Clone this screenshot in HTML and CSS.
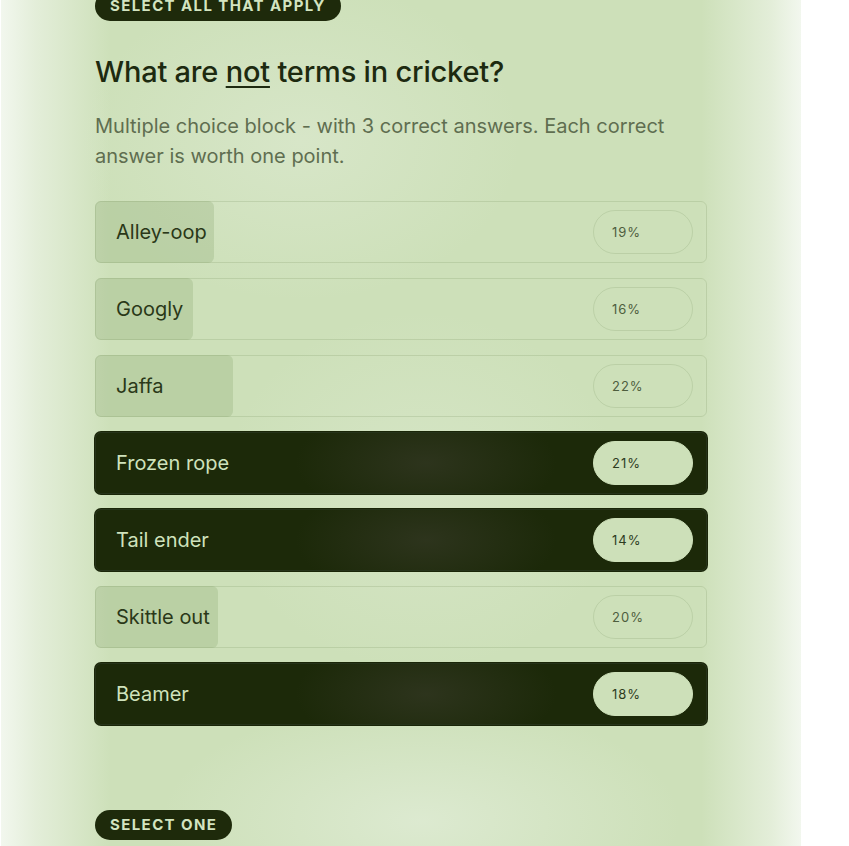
FILE: index.html
```html
<!DOCTYPE html>
<html>
<head>
<meta charset="utf-8">
<link rel="stylesheet" href="styles.css">
</head>
<body>
<div class="panel">
  <section class="block">
    <span class="badge">Select all that apply</span>
    <h2 class="title">What are <u>not</u> terms in cricket?</h2>
    <p class="desc">Multiple choice block - with 3 correct answers. Each correct answer is worth one point.</p>
    <div class="options">
      <div class="option"><div class="fill" style="width:19.5%"></div><span class="label">Alley-oop</span><span class="pct">19%</span></div>
      <div class="option"><div class="fill" style="width:16%"></div><span class="label">Googly</span><span class="pct">16%</span></div>
      <div class="option"><div class="fill" style="width:22.6%"></div><span class="label">Jaffa</span><span class="pct">22%</span></div>
      <div class="option selected"><span class="label">Frozen rope</span><span class="pct">21%</span></div>
      <div class="option selected"><span class="label">Tail ender</span><span class="pct">14%</span></div>
      <div class="option"><div class="fill" style="width:20.1%"></div><span class="label">Skittle out</span><span class="pct">20%</span></div>
      <div class="option selected"><span class="label">Beamer</span><span class="pct">18%</span></div>
    </div>
  </section>
  <section class="block next">
    <span class="badge">Select one</span>
  </section>
</div>
</body>
</html>
```
FILE: styles.css
```css
html, body {
  margin: 0;
  padding: 0;
  background: #ffffff;
  overflow: hidden;
}
body {
  font-family: Inter, "Noto Sans", sans-serif;
}
.panel {
  width: 800px;
  margin: -9px 0 0 1px;
  padding: 0 94px;
  box-sizing: border-box;
  min-height: 900px;
  background:
    linear-gradient(90deg, rgba(242,247,238,1) 0px, rgba(242,247,238,0.6) 35px, rgba(242,247,238,0) 110px, rgba(242,247,238,0) 700px, rgba(242,247,238,0.6) 770px, rgba(242,247,238,1) 800px),
    radial-gradient(ellipse 220px 160px at 300px 150px, rgba(222,234,210,0.6), rgba(222,234,210,0)),
    radial-gradient(ellipse 200px 180px at 420px 500px, rgba(222,234,210,0.5), rgba(222,234,210,0)),
    radial-gradient(ellipse 260px 120px at 420px 830px, rgba(224,236,214,0.8), rgba(224,236,214,0)),
    #cde0b9;
}
.badge {
  display: inline-block;
  height: 30px;
  line-height: 30px;
  padding: 0 15px;
  border-radius: 15px;
  background: #1e2a0b;
  color: #d3e4c0;
  font-size: 15px;
  font-weight: 700;
  letter-spacing: 1.4px;
  text-transform: uppercase;
}
.title {
  margin: 33px 0 0;
  font-size: 29px;
  line-height: 36px;
  font-weight: 500;
  color: #1d2a10;
  letter-spacing: -0.2px;
}
.title u {
  text-decoration-thickness: 2px;
  text-underline-offset: 4px;
}
.desc {
  margin: 21px 0 0;
  font-size: 20px;
  line-height: 30px;
  color: #5f6e50;
  max-width: 600px;
}
.options {
  margin-top: 30px;
  display: flex;
  flex-direction: column;
  gap: 15px;
}
.option {
  position: relative;
  height: 62px;
  box-sizing: border-box;
  border: 1px solid rgba(60, 90, 30, 0.13);
  border-radius: 6px;
  display: flex;
  align-items: center;
  justify-content: space-between;
  padding: 0 13px 0 20px;
}
.fill {
  position: absolute;
  left: -1px;
  top: -1px;
  bottom: -1px;
  background: rgba(120, 150, 90, 0.22);
  border-radius: 6px;
}
.label {
  position: relative;
  font-size: 20px;
  color: #2a3818;
}
.pct {
  position: relative;
  width: 100px;
  height: 44px;
  box-sizing: border-box;
  border: 1px solid rgba(60, 90, 30, 0.12);
  border-radius: 22px;
  padding-left: 18px;
  display: flex;
  align-items: center;
  font-size: 13px;
  letter-spacing: 1px;
  color: #4e5e3e;
}
.option.selected {
  border: 1px solid #26331a;
  box-shadow: 0 0 0 1px #1a2608;
  background:
    radial-gradient(ellipse 130px 60px at 330px 50%, rgba(48,54,32,0.85), rgba(48,54,32,0)),
    #1c2909;
}
.option.selected .label {
  color: #cfe2bc;
}
.option.selected .pct {
  background: #cde0b9;
  border-color: #cde0b9;
  color: #2e3c1e;
}
.next {
  margin-top: 85px;
}
```
